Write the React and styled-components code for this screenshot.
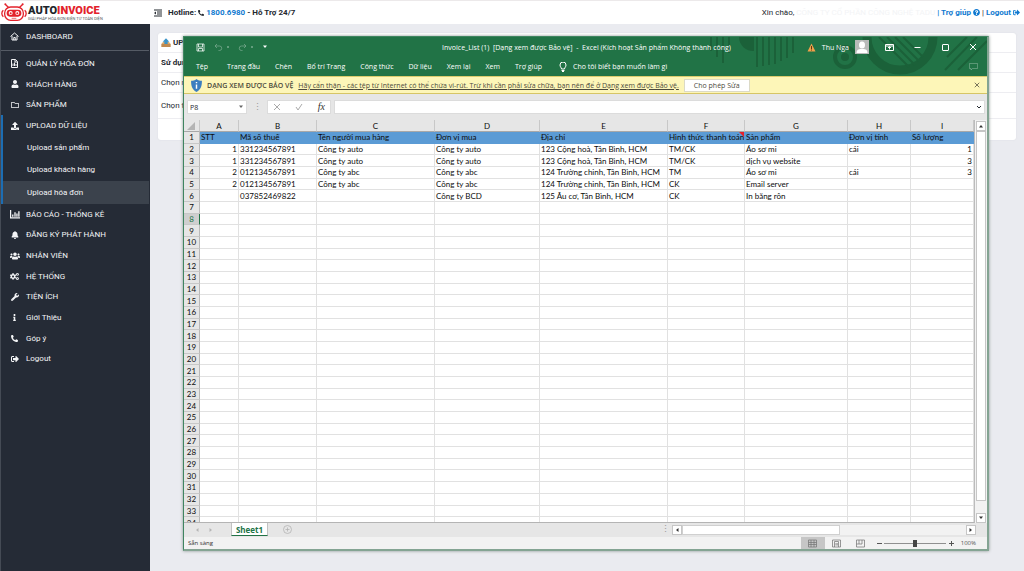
import React from "react";
import styled, { createGlobalStyle } from "styled-components";
import {
  FaUser, FaUpload, FaBell, FaUsers, FaCogs, FaWrench, FaInfo, FaPhoneAlt,
  FaSignOutAlt, FaRegFolder, FaQuestionCircle,
} from "react-icons/fa";

const web = `Roboto, "Liberation Sans", sans-serif`;
const ui = `"Open Sans", "Noto Sans", sans-serif`;
const cellFont = `Lato, "Noto Sans", sans-serif`;

const Global = createGlobalStyle`
  *, *::before, *::after { box-sizing: border-box; }
  body { margin: 0; background: #eaebf0; font-family: ${web}; font-size: 8px; color: #23282f; }
  button, input { font: inherit; color: inherit; margin: 0; padding: 0; border: 0; background: none; }
  a { color: inherit; text-decoration: none; }
  svg { display: block; flex: none; }
`;

const Page = styled.div`
  position: relative;
  min-height: 100vh;
  display: flex;
  flex-direction: column;
`;

const Header = styled.header`
  display: flex;
  align-items: center;
  height: 24px;
  padding-right: 4px;
  background: #fff;
  border-top: 1px solid #ece9ea;
`;

const Brand = styled.a`
  display: flex;
  align-items: center;
  gap: 1px;
  width: 154px;
  padding-left: 1px;
`;

const BrandText = styled.span`
  display: flex;
  flex-direction: column;
  padding-top: 1px;
`;

const BrandName = styled.strong`
  font: 900 11px/10px Roboto, sans-serif;
  color: #20242a;
`;

const BrandRed = styled.span`
  color: #e3222b;
`;

const BrandLine = styled.span`
  font: 4px/5px Roboto, sans-serif;
  white-space: nowrap;
  color: #55585c;
`;

const Hotline = styled.div`
  display: flex;
  align-items: center;
  gap: 2px;
  font-weight: 700;
  svg:first-child { margin-right: 4px; }
`;

const BlueLink = styled.a`
  display: inline-flex;
  align-items: center;
  gap: 2px;
  font-weight: 700;
  color: #0f79d0;
`;

const Account = styled.div`
  display: flex;
  align-items: center;
  gap: 2px;
  margin-left: auto;
`;

const Company = styled.span`
  color: #f3f4f6;
`;

const Body = styled.div`
  display: flex;
  flex: 1;
`;

const Sidebar = styled.nav`
  flex: 0 0 150px;
  background: #252b36;
  border-left: 1px solid #454b55;
  color: #f4f5f7;
`;

const NavGroup = styled.div`
  display: grid;
  grid-auto-rows: 1fr;
  height: ${(p) => p.$height}px;
  margin-right: 1px;
`;

const TopGroup = styled(NavGroup)`
  padding-bottom: 2px;
  margin-bottom: 2px;
  border-bottom: 1px solid #555b65;
`;

const NavItem = styled.a`
  display: flex;
  align-items: center;
  gap: 7px;
  padding-left: ${(p) => (p.$active ? 7 : 9)}px;
  border-left: ${(p) => (p.$active ? "2px solid #1c6db3" : "0")};
`;

const NavIcon = styled.span`
  display: flex;
  justify-content: center;
  width: 9px;
`;

const SubItem = styled.a`
  display: flex;
  align-items: center;
  padding-left: 24px;
  border-left: 2px solid #1c6db3;
  background: ${(p) => (p.$current ? "#3b424c" : "none")};
`;

const Content = styled.main`
  flex: 1;
  padding: 9px 8px;
`;

const Card = styled.section`
  background: #fff;
  border-radius: 3px;
  box-shadow: 0 0 2px #dcdde2;
`;

const CardRow = styled.div`
  display: flex;
  align-items: center;
  gap: 2px;
  height: ${(p) => p.$height}px;
  padding-left: 3px;
  border-bottom: 1px solid #ededf1;
  font-weight: ${(p) => (p.$bold ? 700 : 400)};
  &:last-child { border-bottom: 0; }
`;

const Excel = styled.section`
  position: absolute;
  top: 36px;
  right: 35px;
  bottom: 20px;
  left: 183px;
  display: flex;
  flex-direction: column;
  border: 1px solid #3f8560;
  border-right: 2px solid #84a493;
  border-bottom: 2px solid #84a493;
  box-shadow: 0 0 3px #8a9390;
  background: #e6e6e6;
  font-family: ${ui};
  font-size: 7px;
`;

const Ribbon = styled.div`
  position: relative;
  flex: none;
  height: 39px;
  background: #217346;
  color: #fff;
`;

const Pattern = styled.svg`
  position: absolute;
  top: 0;
  right: 0;
`;

const TitleBar = styled.div`
  position: relative;
  display: flex;
  align-items: center;
  height: 20px;
  padding: 0 10px 0 12px;
`;

const QuickAccess = styled.div`
  display: flex;
  flex: 1;
  gap: 9px;
  align-items: center;
`;

const Faded = styled.div`
  display: flex;
  align-items: center;
  gap: 4px;
  opacity: 0.4;
`;

const Title = styled.h1`
  margin: 0;
  font-size: 7px;
  font-weight: 400;
  white-space: pre;
`;

const TitleRight = styled.div`
  display: flex;
  flex: 1;
  gap: 6px;
  align-items: center;
  justify-content: flex-end;
`;

const Caption = styled.div`
  display: flex;
  gap: 19px;
  margin-left: 10px;
`;

const IconButton = styled.button`
  display: flex;
  align-items: center;
  justify-content: center;
`;

const Avatar = styled.span`
  display: flex;
  background: #b9bab9;
`;

const Tabs = styled.div`
  position: relative;
  display: flex;
  align-items: center;
  gap: 15px;
  height: 19px;
  padding: 0 9px 0 12px;
`;

const RibbonTab = styled(IconButton)`
  &:first-child { margin-right: 4px; }
`;

const Tell = styled.button`
  display: flex;
  align-items: center;
  gap: 6px;
  margin-left: 2px;
`;

const Comment = styled(IconButton)`
  margin-left: auto;
`;

const Warning = styled.div`
  display: flex;
  flex: none;
  align-items: center;
  gap: 5px;
  height: 18px;
  padding: 0 7px;
  background: #fdf6b8;
  border-top: 1px solid #dccb6d;
  border-bottom: 1px solid #d6c566;
  color: #4c4a3c;
  white-space: pre;
  a { text-decoration: underline; }
`;

const WarningTitle = styled.strong`
  font-weight: 600;
`;

const Enable = styled.button`
  height: 13px;
  padding: 0 9px;
  background: #fff;
  border: 1px solid #dcdac6;
`;

const Push = styled.span`
  margin-left: auto;
`;

const FormulaBar = styled.div`
  display: flex;
  flex: none;
  align-items: center;
  gap: 3px;
  height: 26px;
  padding: 0 2px 0 3px;
`;

const Box = styled.div`
  display: flex;
  align-items: center;
  justify-content: space-between;
  flex: ${(p) => (p.$width ? `0 0 ${p.$width}px` : 1)};
  min-width: 0;
  height: 14px;
  padding: 0 ${(p) => p.$pad || 2}px;
  background: #fff;
  border: 1px solid #dcdcdc;
  input { flex: 1; min-width: 0; outline: 0; }
`;

const Fx = styled.em`
  font: italic 10px/10px "Liberation Serif", serif;
  color: #333;
`;

const Dots = styled.span`
  width: 14px;
  text-align: center;
  font-size: 9px;
  line-height: 12px;
  color: #9a9a9a;
`;

const SheetArea = styled.div`
  display: flex;
  flex: 1;
  min-height: 0;
`;

const GridView = styled.div`
  flex: 1;
  min-width: 0;
  overflow: hidden;
  background: #fff;
  border-bottom: 1px solid #b4b4b4;
`;

const Sheet = styled.table`
  width: 100%;
  height: 409px;
  table-layout: fixed;
  border-collapse: separate;
  border-spacing: 0;
  font: 8px/10px ${cellFont};
  color: #0c0c0c;
`;

const ColHead = styled.th`
  height: 12px;
  padding: 0;
  background: #e6e6e6;
  border-right: 1px solid #c8c8c8;
  border-bottom: 1px solid #a8a8a8;
  font-weight: 400;
`;

const RowHead = styled.th`
  padding: 0;
  background: ${(p) => (p.$active ? "#cfcfcf" : "#e6e6e6")};
  color: ${(p) => (p.$active ? "#217346" : "inherit")};
  border-right: 1px solid ${(p) => (p.$active ? "#217346" : "#b9b9b9")};
  border-bottom: 1px solid #c8c8c8;
  font-weight: 400;
`;

const Cell = styled.td`
  position: relative;
  padding: 0 1px;
  overflow: hidden;
  white-space: nowrap;
  text-align: ${(p) => (p.$right ? "right" : "left")};
  background: ${(p) => (p.$head ? "#5b9bd5" : "#fff")};
  border-right: 1px solid ${(p) => (p.$head ? "#5b9bd5" : "#e1e1e1")};
  border-bottom: 1px solid ${(p) => (p.$head ? "#5b9bd5" : "#e1e1e1")};
`;

const NoteMark = styled.i`
  position: absolute;
  top: 0;
  right: 0;
  border-top: 5px solid #e8202a;
  border-left: 5px solid transparent;
`;

const VScroll = styled.div`
  display: flex;
  flex-direction: column;
  flex: 0 0 12px;
  padding: 1px 1px 0 1px;
  background: #f2f2f2;
  border-left: 1px solid #bcbcbc;
`;

const ScrollButton = styled(IconButton)`
  flex: none;
  width: 10px;
  height: 10px;
  background: #fff;
  border: 1px solid #c6c6c6;
`;

const VThumb = styled.div`
  flex: 1;
  margin-bottom: 12px;
  background: #fff;
  border: 1px solid #c6c6c6;
`;

const SheetTabs = styled.div`
  display: flex;
  flex: none;
  align-items: flex-start;
  height: 14px;
  padding-right: 11px;
  color: #b2b2b2;
`;

const TabArrows = styled.div`
  display: flex;
  align-items: center;
  gap: 8px;
  width: 47px;
  height: 13px;
  padding-left: 10px;
`;

const SheetTab = styled.button`
  width: 37px;
  height: 13px;
  background: #fff;
  border: 1px solid #c2c2c2;
  border-top: 0;
  border-bottom: 1px solid #217346;
  font: 700 8px/11px ${ui};
  color: #217346;
`;

const AddTab = styled(IconButton)`
  height: 13px;
  margin: 0 auto 0 15px;
`;

const HScroll = styled.div`
  display: flex;
  flex: 0 0 304px;
  height: 10px;
  margin-top: 2px;
  background: #f2f2f2;
`;

const HThumb = styled.div`
  width: 158px;
  background: #fff;
  border: 1px solid #d0d0d0;
`;

const Status = styled.footer`
  display: flex;
  flex: none;
  align-items: center;
  height: 12px;
  padding: 0 11px 0 4px;
  background: #f2f2f2;
  font-size: 6px;
  color: #333;
`;

const ViewButton = styled(IconButton)`
  width: 24px;
  height: 12px;
  color: #777;
  background: ${(p) => (p.$on ? "#c6c6c6" : "none")};
`;

const Zoom = styled.div`
  display: flex;
  align-items: center;
  gap: 2px;
  margin-left: 3px;
  color: #555;
`;

const Slider = styled.input`
  appearance: none;
  width: 62px;
  height: 8px;
  background: linear-gradient(#8f8f8f, #8f8f8f) center / 100% 1px no-repeat;
  &::-webkit-slider-thumb { appearance: none; width: 4px; height: 7px; background: #444; }
`;

const Percent = styled.span`
  margin-left: 5px;
`;

const Svg = ({ w = 9, h = w, box = "0 0 18 18", sw = 2, children }) => (
  <svg width={w} height={h} viewBox={box} fill="none" stroke="currentColor" strokeWidth={sw}>{children}</svg>
);

const HomeIcon = () => (
  <Svg><path d="M1 9 9 2l8 7M4 8v8h10V8M7.500 16v-5h3v5" /></Svg>
);
const ReportIcon = () => (
  <Svg><path d="M3 1h8l4 4v12H3zM6 14V9M9 14V7M12 14v-4M10 1v5h5" /></Svg>
);
const ChartIcon = () => (
  <Svg w={10}><path d="M1 2v14h17M5 14v-4M9 14V6M12.500 14V8M16 14V4" strokeWidth="2.400" /></Svg>
);
const MenuIcon = () => (
  <Svg w={8} box="0 0 16 16" sw={2.4}>
    <path d="M0 2h16M6 6h10M6 10h10M0 14h16" /><path d="M4 5v6L0 8z" fill="currentColor" stroke="none" />
  </Svg>
);
const Cross = ({ size = 8 }) => (
  <Svg w={size} box="0 0 8 8" sw={1}><path d="m1 1 6 6M7 1 1 7" /></Svg>
);
const Arrow = ({ turn = 0, color = "#333" }) => (
  <svg width="6" height="6" viewBox="0 0 6 6"><path d="M1 4.500 3 2l2 2.500z" fill={color} transform={`rotate(${turn} 3 3)`} /></svg>
);
const Dot = () => (
  <svg width="2" height="2" viewBox="0 0 2 2"><circle cx="1" cy="1" r="1" fill="currentColor" /></svg>
);

const Robot = () => (
  <svg width="26" height="19" viewBox="0 0 78 57">
    <g fill="none" stroke="#e3222b" strokeWidth="4">
      <path d="M22 13 14 5M56 13l8-8" />
      <rect x="11" y="12" width="56" height="40" rx="18" />
      <path d="M7 22c-6 5-6 13 0 19M71 22c6 5 6 13 0 19" />
    </g>
    <circle cx="13" cy="4" r="3" fill="#e3222b" /><circle cx="65" cy="4" r="3" fill="#e3222b" />
    <rect x="17" y="20" width="44" height="21" rx="10" fill="#e3222b" />
    <circle cx="29" cy="30" r="6" fill="#fff" /><circle cx="49" cy="30" r="6" fill="#fff" />
    <circle cx="29" cy="31" r="3" fill="#e3222b" /><circle cx="49" cy="31" r="3" fill="#e3222b" />
    <path d="M32 46h14" stroke="#e3222b" strokeWidth="2" />
  </svg>
);

const mainNav = [
  [ReportIcon, "QUẢN LÝ HÓA ĐƠN"],
  [FaUser, "KHÁCH HÀNG"],
  [FaRegFolder, "SẢN PHẨM"],
  [FaUpload, "UPLOAD DỮ LIỆU", true],
];
const subNav = ["Upload sản phẩm", "Upload khách hàng", "Upload hóa đơn"];
const lowerNav = [
  [ChartIcon, "BÁO CÁO - THỐNG KÊ"],
  [FaBell, "ĐĂNG KÝ PHÁT HÀNH"],
  [FaUsers, "NHÂN VIÊN", false, 10],
  [FaCogs, "HỆ THỐNG", false, 9],
  [FaWrench, "TIỆN ÍCH"],
  [FaInfo, "Giới Thiệu", false, 7],
  [FaPhoneAlt, "Góp ý", false, 7],
  [FaSignOutAlt, "Logout"],
];
const ribbonTabs = ["Tệp", "Trang đầu", "Chèn", "Bố trí Trang", "Công thức", "Dữ liệu", "Xem lại", "Xem", "Trợ giúp"];
const columns = [["A", 39], ["B", 78], ["C", 118], ["D", 105], ["E", 128], ["F", 77], ["G", 103], ["H", 63], ["I", 63]];
const data = [
  ["STT", "Mã số thuế", "Tên người mua hàng", "Đơn vị mua", "Địa chỉ", "Hình thức thanh toán", "Sản phẩm", "Đơn vị tính", "Số lượng"],
  ["1", "331234567891", "Công ty auto", "Công ty auto", "123 Cộng hoà, Tân Bình, HCM", "TM/CK", "Áo sơ mi", "cái", "1"],
  ["1", "331234567891", "Công ty auto", "Công ty auto", "123 Cộng hoà, Tân Bình, HCM", "TM/CK", "dịch vụ website", "", "3"],
  ["2", "012134567891", "Công ty abc", "Công ty abc", "124 Trường chinh, Tân Bình, HCM", "TM", "Áo sơ mi", "cái", "3"],
  ["2", "012134567891", "Công ty abc", "Công ty abc", "124 Trường chinh, Tân Bình, HCM", "CK", "Email server", "", ""],
  ["", "037852469822", "", "Công ty BCD", "125 Âu cơ, Tân Bình, HCM", "CK", "In băng rôn", "", ""],
];
const rows = Array.from({ length: 34 }, (_, i) => data[i] || Array(9).fill(""));

const NavList = ({ items }) =>
  items.map(([Icon, label, active, size = 8]) => (
    <NavItem href="#" key={label} $active={active}>
      <NavIcon><Icon size={size} /></NavIcon>
      {label}
    </NavItem>
  ));

export default function App() {
  return (
    <Page>
      <Global />
      <Header>
        <Brand href="#">
          <Robot />
          <BrandText>
            <BrandName>AUTO<BrandRed>INVOICE</BrandRed></BrandName>
            <BrandLine>GIẢI PHÁP HÓA ĐƠN ĐIỆN TỬ TOÀN DIỆN</BrandLine>
          </BrandText>
        </Brand>
        <Hotline>
          <MenuIcon /> Hotline: <FaPhoneAlt size={6} />
          <BlueLink href="#">1800.6980</BlueLink> - Hỗ Trợ 24/7
        </Hotline>
        <Account>
          Xin chào, <Company>CÔNG TY CỔ PHẦN CÔNG NGHỆ TADU</Company>
          <BlueLink href="#">| Trợ giúp <FaQuestionCircle size={7} /></BlueLink> |
          <BlueLink href="#">Logout <FaSignOutAlt size={7} /></BlueLink>
        </Account>
      </Header>
      <Body>
        <Sidebar>
          <TopGroup $height={27}>
            <NavList items={[[HomeIcon, "DASHBOARD"]]} />
          </TopGroup>
          <NavGroup $height={83}><NavList items={mainNav} /></NavGroup>
          <NavGroup $height={68}>
            {subNav.map((label, i) => <SubItem href="#" key={label} $current={i === 2}>{label}</SubItem>)}
          </NavGroup>
          <NavGroup $height={165}><NavList items={lowerNav} /></NavGroup>
        </Sidebar>
        <Content>
          <Card>
            <CardRow $height={20} $bold>
              <svg width="10" height="10" viewBox="0 0 30 30">
                <path d="M1 18h28v9H1z" fill="#c08a50" /><path d="m6 12h18l5 6H1z" fill="#d9aa70" />
                <path d="M15 1 5 11h5v7h10v-7h5z" fill="#3a93c8" />
              </svg>
              UPLOAD HÓA ĐƠN
            </CardRow>
            <CardRow $height={20} $bold>Sử dụng</CardRow>
            <CardRow $height={20}>Chọn mẫu</CardRow>
            <CardRow $height={26}>Chọn tệp</CardRow>
            <CardRow $height={21} />
          </Card>
        </Content>
      </Body>

      <Excel>
        <Ribbon>
          <Pattern width="280" height="39" viewBox="0 0 280 39">
            <g fill="none" stroke="#1b6139" strokeWidth="3">
              <path d="M4 0v14M10 0v20M16 0v26M22 0v16M50 0v30M56 0v29M62 0v28M68 0v27M74 0v24M80 0v21M86 0v16" strokeWidth="2" />
              <path d="M32 0a14 14 0 0 0 15 14V0z" fill="#1b6139" stroke="none" />
              <circle cx="138" cy="20" r="10" strokeWidth="4" /><circle cx="138" cy="20" r="4" fill="#1b6139" stroke="none" />
              <path d="M160 0a33 33 0 0 0 66 0" strokeWidth="9" />
              <path d="m172 0 30 30M180 0l28 28M188 0l24 24M196 0l20 20" strokeWidth="2" />
              <path d="m270 0-32 33M280 4l-29 29M260 0l-20 20" strokeWidth="2" />
            </g>
          </Pattern>
          <TitleBar>
            <QuickAccess>
              <IconButton aria-label="Save"><Svg w={9} sw={1.5}><path d="M2 2h14v14H2zM5 2v6h8V2M5 16v-5h8v5" /></Svg></IconButton>
              <Faded>
                <IconButton aria-label="Undo"><Svg w={9} sw={1.5}><path d="M6 2 2 6l4 4M2 6h9a4 4 0 0 1 0 9H9" /></Svg></IconButton>
                <Dot />
              </Faded>
              <Faded>
                <IconButton aria-label="Redo"><Svg w={9} sw={1.5}><path d="m12 2 4 4-4 4M16 6H7a4 4 0 0 0 0 9h2" /></Svg></IconButton>
                <Dot />
              </Faded>
              <IconButton aria-label="Customize"><Arrow turn={180} color="#fff" /></IconButton>
            </QuickAccess>
            <Title>{"Invoice_List (1)  [Dạng xem được Bảo vệ]  -  Excel (Kích hoạt Sản phẩm Không thành công)"}</Title>
            <TitleRight>
              <svg width="9" height="9" viewBox="0 0 18 18"><path d="M9 1 17 17H1z" fill="#f0a04b" /><path d="M9 6v6M9 13v2" stroke="#5a3a10" strokeWidth="2" /></svg>
              <span>Thu Nga</span>
              <Avatar><svg width="14" height="14" viewBox="0 0 28 28" fill="#fff"><ellipse cx="14" cy="10" rx="6" ry="7" /><path d="M3 26c0-8 6-8 11-8s11 0 11 8z" /></svg></Avatar>
              <Caption>
                <IconButton aria-label="Ribbon options"><Svg w={9} sw={2}><path d="M1 3h16v12H1zM1 6h16M9 13V8M6 10l3-3 3 3" /></Svg></IconButton>
                <IconButton aria-label="Minimize"><Svg w={9} sw={2}><path d="M3 9h12" /></Svg></IconButton>
                <IconButton aria-label="Maximize"><Svg w={9} sw={2}><rect x="3" y="3" width="12" height="12" rx="1" /></Svg></IconButton>
                <IconButton aria-label="Close"><Cross /></IconButton>
              </Caption>
            </TitleRight>
          </TitleBar>
          <Tabs>
            {ribbonTabs.map((t) => <RibbonTab key={t}>{t}</RibbonTab>)}
            <Tell>
              <Svg w={8} h={10} box="0 0 16 20" sw={2}><path d="M5 14c0-3-3-4-3-8a6 6 0 0 1 12 0c0 4-3 5-3 8zM5 17h6M6 19h4" /></Svg>
              Cho tôi biết bạn muốn làm gì
            </Tell>
            <Comment aria-label="Comments"><Svg w={9} sw={1.5}><path d="M1 3h16v10H7l-3 3v-3H1z" opacity=".35" /></Svg></Comment>
          </Tabs>
        </Ribbon>
        <Warning>
          <svg width="11" height="13" viewBox="0 0 30 36"><path d="M15 0c5 4 10 5 15 5 0 14-2 24-15 31C2 29 0 19 0 5c5 0 10-1 15-5z" fill="#3c7ebf" /><path d="M15 8v4M15 15v12" stroke="#fff" strokeWidth="4" /></svg>
          <WarningTitle>DẠNG XEM ĐƯỢC BẢO VỆ</WarningTitle>
          <a href="#">Hãy cẩn thận - các tệp từ Internet có thể chứa vi-rút. Trừ khi cần phải sửa chữa, bạn nên để ở Dạng xem được Bảo vệ.</a>
          <Enable>Cho phép Sửa</Enable>
          <Push><IconButton aria-label="Dismiss"><Cross size={6} /></IconButton></Push>
        </Warning>
        <FormulaBar>
          <Box $width={60}><input aria-label="Name box" defaultValue="P8" /><Arrow turn={180} color="#666" /></Box>
          <Dots>⋮</Dots>
          <Box $width={64} $pad={5}>
            <Svg w={8} box="0 0 8 8" sw={1}><path d="m1 1 6 6M7 1 1 7" stroke="#aaa" /></Svg>
            <Svg w={8} box="0 0 8 8" sw={1}><path d="m1 4 2 3 4-6" stroke="#aaa" /></Svg>
            <Fx>fx</Fx>
          </Box>
          <Box>
            <input aria-label="Formula" />
            <Svg w={6} box="0 0 6 6" sw={1}><path d="m1 2 2 2 2-2" /></Svg>
          </Box>
        </FormulaBar>
        <SheetArea>
          <GridView>
            <Sheet>
              <colgroup>
                <col width="16" />
                {columns.map(([c, w]) => <col key={c} width={w} />)}
                <col />
              </colgroup>
              <thead>
                <tr>
                  <ColHead><Svg w={12} h={9} box="0 0 12 9"><path d="M11 1v8H3z" fill="#b4b4b4" stroke="none" /></Svg></ColHead>
                  {columns.map(([c]) => <ColHead key={c}>{c}</ColHead>)}
                  <ColHead />
                </tr>
              </thead>
              <tbody>
                {rows.map((r, i) => (
                  <tr key={i}>
                    <RowHead $active={i === 7}>{i + 1}</RowHead>
                    {r.map((v, j) => (
                      <Cell key={j} $head={i === 0} $right={i > 0 && (j === 0 || j === 8)}>
                        {v}{i === 0 && j === 5 && <NoteMark />}
                      </Cell>
                    ))}
                    <Cell $head={i === 0} />
                  </tr>
                ))}
              </tbody>
            </Sheet>
          </GridView>
          <VScroll>
            <ScrollButton aria-label="Scroll up"><Arrow /></ScrollButton>
            <VThumb />
            <ScrollButton aria-label="Scroll down"><Arrow turn={180} /></ScrollButton>
          </VScroll>
        </SheetArea>
        <SheetTabs>
          <TabArrows><Arrow turn={270} color="#b5b5b5" /><Arrow turn={90} color="#b5b5b5" /></TabArrows>
          <SheetTab>Sheet1</SheetTab>
          <AddTab aria-label="New sheet"><Svg sw={1.5}><circle cx="9" cy="9" r="8" /><path d="M9 5v8M5 9h8" /></Svg></AddTab>
          <Dots>⋮</Dots>
          <HScroll>
            <ScrollButton aria-label="Scroll left"><Arrow turn={270} /></ScrollButton>
            <HThumb />
            <Push><ScrollButton aria-label="Scroll right"><Arrow turn={90} /></ScrollButton></Push>
          </HScroll>
        </SheetTabs>
        <Status>
          Sẵn sàng
          <Push />
          <ViewButton $on aria-label="Normal"><Svg sw={1.5}><path d="M1 2h16v14H1zM1 7h16M1 11h16M6 2v14M12 2v14" /></Svg></ViewButton>
          <ViewButton aria-label="Page layout"><Svg sw={1.5}><path d="M1 2h16v14H1zM5 16V5h8v11M8 8v5M10.500 8v5" /></Svg></ViewButton>
          <ViewButton aria-label="Page break"><Svg sw={1.5}><path d="M1 2h16v14H1zM6 2v8M12 2v8H1" /></Svg></ViewButton>
          <Zoom>
            <Svg w={6} box="0 0 6 6" sw={1}><path d="M1 3.500h5" /></Svg>
            <Slider type="range" aria-label="Zoom" defaultValue="50" />
            <Svg w={6} box="0 0 6 6" sw={1}><path d="M1 3.500h5M3.500 1v5" /></Svg>
            <Percent>100%</Percent>
          </Zoom>
        </Status>
      </Excel>
    </Page>
  );
}
